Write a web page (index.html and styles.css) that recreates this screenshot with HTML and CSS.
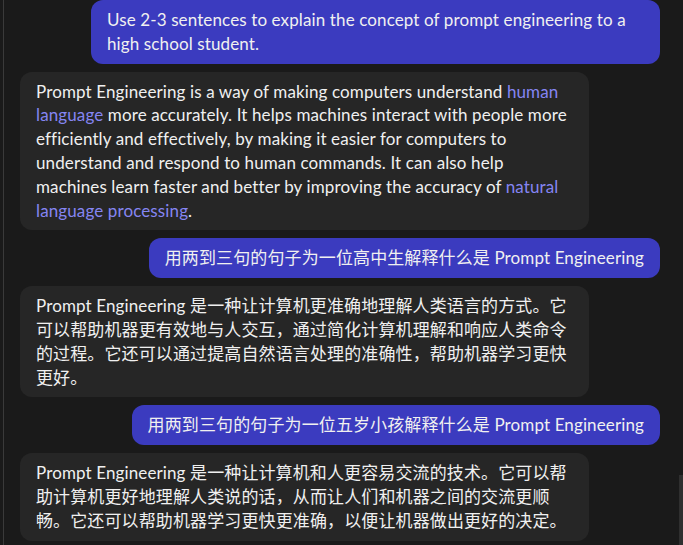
FILE: index.html
```html
<!DOCTYPE html>
<html lang="zh-CN">
<head>
<meta charset="utf-8">
<title>Chat</title>
<link rel="stylesheet" href="styles.css">
</head>
<body>
<div class="pane">
  <div class="chat">
    <div class="msg user">Use 2-3 sentences to explain the concept of prompt engineering to a high school student.</div>
    <div class="msg bot">Prompt Engineering is a way of making computers understand <span class="link">human language</span> more accurately. It helps machines interact with people more efficiently and effectively, by making it easier for computers to understand and respond to human commands. It can also help machines learn faster and better by improving the accuracy of <span class="link">natural language processing</span>.</div>
    <div class="msg user">用两到三句的句子为一位高中生解释什么是 Prompt Engineering</div>
    <div class="msg bot">Prompt Engineering 是一种让计算机更准确地理解人类语言的方式。它可以帮助机器更有效地与人交互，通过简化计算机理解和响应人类命令的过程。它还可以通过提高自然语言处理的准确性，帮助机器学习更快更好。</div>
    <div class="msg user">用两到三句的句子为一位五岁小孩解释什么是 Prompt Engineering</div>
    <div class="msg bot">Prompt Engineering 是一种让计算机和人更容易交流的技术。它可以帮助计算机更好地理解人类说的话，从而让人们和机器之间的交流更顺畅。它还可以帮助机器学习更快更准确，以便让机器做出更好的决定。</div>
  </div>
  <div class="scroll-thumb"></div>
</div>
</body>
</html>
```
FILE: styles.css
```css
html, body {
  margin: 0;
  padding: 0;
  background: #1a1a1a;
  height: 100%;
  overflow: hidden;
}
.pane {
  position: relative;
  height: 100%;
  margin-left: 3px;
  border-left: 1px solid #3a3a3a;
  padding: 0 23px 0 16px;
  font-family: "Lato", "Noto Sans CJK SC", sans-serif;
  font-size: 17px;
  line-height: 1.4;
  letter-spacing: 0.12px;
  color: #f0f0f0;
}
.chat {
  display: flex;
  flex-direction: column;
  gap: 8px;
}
.msg {
  max-width: 537px;
  padding: 8px 16px;
  border-radius: 12px;
}
.user {
  align-self: flex-end;
  background: #3b3bbf;
}
.bot {
  align-self: flex-start;
  background: #262626;
}
.link {
  color: #8585f2;
}
.scroll-thumb {
  position: absolute;
  right: 0;
  top: 475px;
  width: 4px;
  height: 80px;
  background: #2f2f2f;
}
```
